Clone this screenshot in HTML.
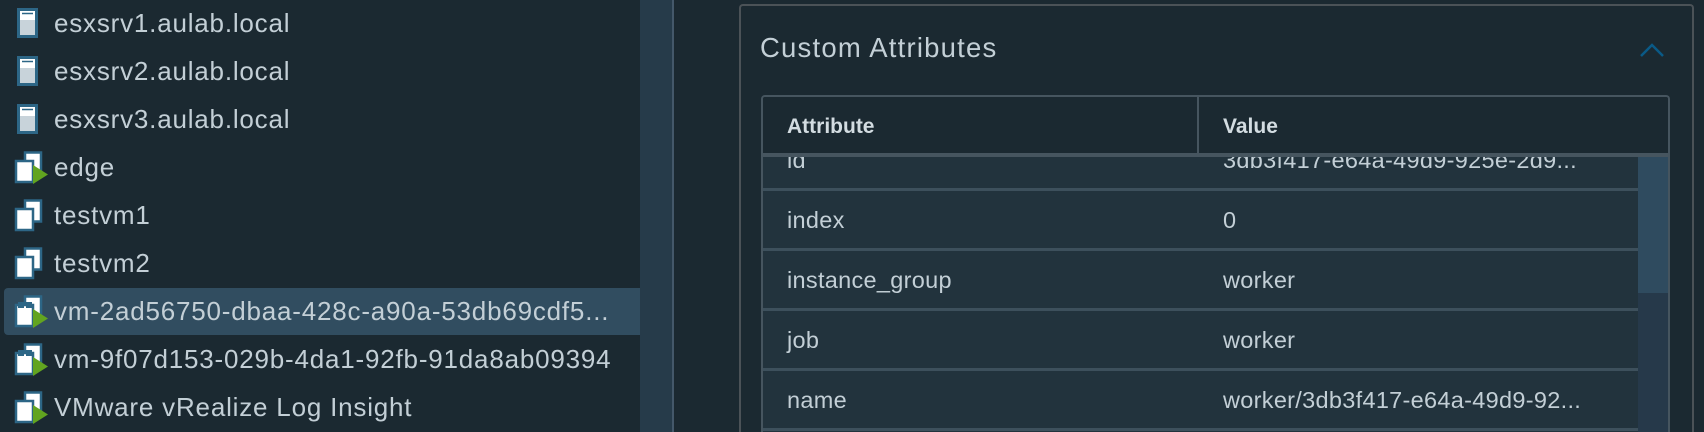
<!DOCTYPE html>
<html><head><meta charset="utf-8"><style>
*{margin:0;padding:0;box-sizing:border-box}
html,body{width:1704px;height:432px;overflow:hidden}
body{background:#1b2931;font-family:"Liberation Sans",sans-serif;color:#c3cfd6;position:relative}
.left{position:absolute;left:0;top:0;width:640px;height:432px;background:#1b2931}
.row{position:absolute;left:4px;width:636px;height:47px}
.row.sel{background:#314d60;border-radius:4px 0 0 4px}
.row span{position:absolute;left:50px;top:0;line-height:47px;font-size:26px;white-space:nowrap;letter-spacing:0.8px}
.row svg{position:absolute;left:13px;top:8px}
.row svg.vm{left:10px;top:7px}
.strip{position:absolute;left:640px;top:0;width:34px;height:432px;background:#263b4a;border-right:2px solid #44586a}
.card{position:absolute;left:739px;top:4px;width:955px;height:428px;border:2px solid #4b5257;border-bottom:none;border-radius:4px 4px 0 0;background:#1b2931}
.title{position:absolute;left:760px;top:32px;font-size:27.5px;color:#c3cfd6;letter-spacing:1.2px}
.chev{position:absolute;left:1639px;top:42px}
.tbl{position:absolute;left:761px;top:95px;width:909px;height:337px;border:2px solid #46555f;border-bottom:none;border-radius:4px 4px 0 0;overflow:hidden;background:#22333d}
.hdr{position:absolute;left:0;top:0;width:100%;height:60px;background:#1b2931;border-bottom:4px solid #46555f;z-index:2}
.hdr b{position:absolute;top:0;line-height:60px;font-size:21px;color:#d3dce1}
.div{position:absolute;left:434px;top:0;width:2px;height:60px;background:#46555f}
.tr{position:absolute;left:0;width:875px;height:60px;border-bottom:3px solid #3d505c}
.tr span{position:absolute;line-height:58px;font-size:23.5px;white-space:nowrap;letter-spacing:0.3px}
.sb{position:absolute;left:875px;top:60px;width:32px;height:280px;background:#26394a}
.thumb{position:absolute;left:875px;top:60px;width:32px;height:136px;background:#2f4b5f}
</style></head><body>
<div class="left">
<div class="row" style="top:0"><svg width="22" height="30"><rect x="1.5" y="1.5" width="18" height="27" fill="#c8d3da" stroke="#2d6686" stroke-width="3"/><rect x="3" y="3" width="15" height="9" fill="#fff"/><line x1="5" y1="5.5" x2="16" y2="5.5" stroke="#2d6686" stroke-width="1.5"/></svg><span>esxsrv1.aulab.local</span></div>
<div class="row" style="top:48px"><svg width="22" height="30"><rect x="1.5" y="1.5" width="18" height="27" fill="#c8d3da" stroke="#2d6686" stroke-width="3"/><rect x="3" y="3" width="15" height="9" fill="#fff"/><line x1="5" y1="5.5" x2="16" y2="5.5" stroke="#2d6686" stroke-width="1.5"/></svg><span>esxsrv2.aulab.local</span></div>
<div class="row" style="top:96px"><svg width="22" height="30"><rect x="1.5" y="1.5" width="18" height="27" fill="#c8d3da" stroke="#2d6686" stroke-width="3"/><rect x="3" y="3" width="15" height="9" fill="#fff"/><line x1="5" y1="5.5" x2="16" y2="5.5" stroke="#2d6686" stroke-width="1.5"/></svg><span>esxsrv3.aulab.local</span></div>
<div class="row" style="top:144px"><svg class="vm" width="36" height="34"><rect x="11" y="1.5" width="16" height="21" fill="#fff" stroke="#2d6686" stroke-width="2.5"/><rect x="2" y="10" width="17" height="21" fill="#fff" stroke="#2d6686" stroke-width="2.5"/><polygon points="19,14 34,23.5 19,33" fill="#62a420"/></svg><span>edge</span></div>
<div class="row" style="top:192px"><svg class="vm" width="36" height="34"><rect x="11" y="1.5" width="16" height="21" fill="#fff" stroke="#2d6686" stroke-width="2.5"/><rect x="2" y="10" width="17" height="21" fill="#fff" stroke="#2d6686" stroke-width="2.5"/></svg><span>testvm1</span></div>
<div class="row" style="top:240px"><svg class="vm" width="36" height="34"><rect x="11" y="1.5" width="16" height="21" fill="#fff" stroke="#2d6686" stroke-width="2.5"/><rect x="2" y="10" width="17" height="21" fill="#fff" stroke="#2d6686" stroke-width="2.5"/></svg><span>testvm2</span></div>
<div class="row sel" style="top:288px"><svg class="vm" width="36" height="34"><rect x="11" y="1.5" width="16" height="21" fill="#fff" stroke="#2d6686" stroke-width="2.5"/><rect x="2" y="10" width="17" height="21" fill="#fff" stroke="#2d6686" stroke-width="2.5"/><rect x="4" y="7" width="6" height="6" fill="#2d6686"/><rect x="12" y="7" width="6" height="6" fill="#2d6686"/><polygon points="19,14 34,23.5 19,33" fill="#62a420"/></svg><span>vm-2ad56750-dbaa-428c-a90a-53db69cdf5...</span></div>
<div class="row" style="top:336px"><svg class="vm" width="36" height="34"><rect x="11" y="1.5" width="16" height="21" fill="#fff" stroke="#2d6686" stroke-width="2.5"/><rect x="2" y="10" width="17" height="21" fill="#fff" stroke="#2d6686" stroke-width="2.5"/><rect x="4" y="7" width="6" height="6" fill="#2d6686"/><rect x="12" y="7" width="6" height="6" fill="#2d6686"/><polygon points="19,14 34,23.5 19,33" fill="#62a420"/></svg><span>vm-9f07d153-029b-4da1-92fb-91da8ab09394</span></div>
<div class="row" style="top:384px"><svg class="vm" width="36" height="34"><rect x="11" y="1.5" width="16" height="21" fill="#fff" stroke="#2d6686" stroke-width="2.5"/><rect x="2" y="10" width="17" height="21" fill="#fff" stroke="#2d6686" stroke-width="2.5"/><polygon points="19,14 34,23.5 19,33" fill="#62a420"/></svg><span>VMware vRealize Log Insight</span></div>
</div>
<div class="strip"></div>
<div class="card"></div>
<div class="title">Custom Attributes</div>
<svg class="chev" width="26" height="16"><polyline points="2,14 13,3 24,14" fill="none" stroke="#0a5a86" stroke-width="2.5"/></svg>
<div class="tbl">
<div class="hdr"><b style="left:24px">Attribute</b><div class="div"></div><b style="left:460px">Value</b></div>
<div class="sb"></div><div class="thumb"></div>
<div class="tr" style="top:34px"><span style="left:24px">id</span><span style="left:460px">3db3f417-e64a-49d9-925e-2d9...</span></div>
<div class="tr" style="top:94px"><span style="left:24px">index</span><span style="left:460px">0</span></div>
<div class="tr" style="top:154px"><span style="left:24px">instance_group</span><span style="left:460px">worker</span></div>
<div class="tr" style="top:214px"><span style="left:24px">job</span><span style="left:460px">worker</span></div>
<div class="tr" style="top:274px"><span style="left:24px">name</span><span style="left:460px">worker/3db3f417-e64a-49d9-92...</span></div>
</div>
</body></html>
